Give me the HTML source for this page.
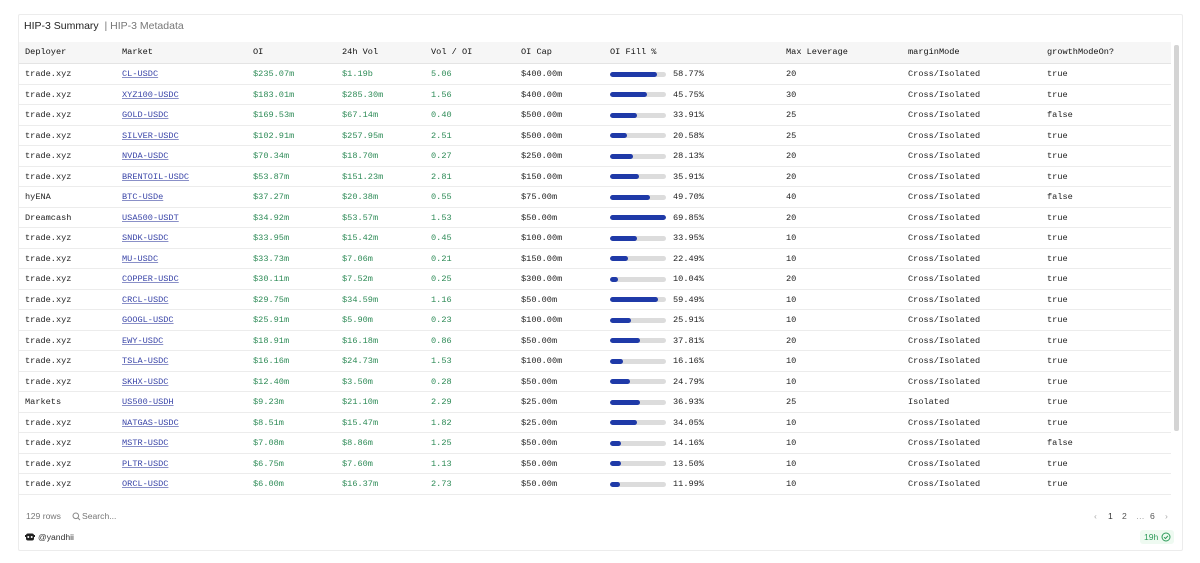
<!DOCTYPE html>
<html><head><meta charset="utf-8"><style>
*{margin:0;padding:0;box-sizing:border-box}
body{width:1200px;height:563px;background:#fff;position:relative;overflow:hidden;font-family:"Liberation Mono",monospace;font-size:8.6px;color:#222}
.card{position:absolute;left:18px;top:14px;width:1165px;height:537px;border:1px solid #ececec;border-radius:2px}
.title{position:absolute;left:24px;top:20px;font-family:"Liberation Sans",sans-serif;font-size:10.5px;color:#222}
.title span{color:#777}
.hdr{position:absolute;left:19px;top:42px;width:1152px;height:22px;background:#f6f6f6;border-bottom:1px solid #e4e4e4}
.row{position:absolute;left:19px;width:1152px;height:20.5px;border-bottom:1px solid #ececec}
.c{position:absolute;top:0;line-height:20px;white-space:nowrap}
.hdr .c{line-height:21px;color:#111}
.g{color:#2e8b57}
.l{color:#3a45a8;text-decoration:underline;text-decoration-color:#8a90c8}
.bar{position:absolute;left:591px;top:7.5px;width:56px;height:5px;border-radius:3px;background:#dcdcdc;overflow:hidden}
.bar i{display:block;height:5px;background:#1f3aa8;border-radius:3px}
.sb{position:absolute;left:1174px;top:45px;width:5px;height:386px;background:#d4d4d4;border-radius:2px}
.foot{position:absolute;font-family:"Liberation Sans",sans-serif;font-size:8.6px;color:#777}
</style></head><body>
<div class="card"></div>
<div class="title">HIP-3 Summary <span>&nbsp;| HIP-3 Metadata</span></div>
<div class="hdr">
<div class="c" style="left:6px">Deployer</div><div class="c" style="left:103px">Market</div><div class="c" style="left:234px">OI</div><div class="c" style="left:323px">24h Vol</div><div class="c" style="left:412px">Vol / OI</div><div class="c" style="left:502px">OI Cap</div><div class="c" style="left:591px">OI Fill %</div><div class="c" style="left:767px">Max Leverage</div><div class="c" style="left:889px">marginMode</div><div class="c" style="left:1028px">growthModeOn?</div>
</div>
<div class="sb"></div>

<div class="row" style="top:64px"><div class="c" style="left:6px">trade.xyz</div><div class="c l" style="left:103px">CL-USDC</div><div class="c g" style="left:234px">$235.07m</div><div class="c g" style="left:323px">$1.19b</div><div class="c g" style="left:412px">5.06</div><div class="c" style="left:502px">$400.00m</div><div class="bar"><i style="width:47px"></i></div><div class="c" style="left:654px">58.77%</div><div class="c" style="left:767px">20</div><div class="c" style="left:889px">Cross/Isolated</div><div class="c" style="left:1028px">true</div></div>
<div class="row" style="top:84.5px"><div class="c" style="left:6px">trade.xyz</div><div class="c l" style="left:103px">XYZ100-USDC</div><div class="c g" style="left:234px">$183.01m</div><div class="c g" style="left:323px">$285.30m</div><div class="c g" style="left:412px">1.56</div><div class="c" style="left:502px">$400.00m</div><div class="bar"><i style="width:36.7px"></i></div><div class="c" style="left:654px">45.75%</div><div class="c" style="left:767px">30</div><div class="c" style="left:889px">Cross/Isolated</div><div class="c" style="left:1028px">true</div></div>
<div class="row" style="top:105px"><div class="c" style="left:6px">trade.xyz</div><div class="c l" style="left:103px">GOLD-USDC</div><div class="c g" style="left:234px">$169.53m</div><div class="c g" style="left:323px">$67.14m</div><div class="c g" style="left:412px">0.40</div><div class="c" style="left:502px">$500.00m</div><div class="bar"><i style="width:27.2px"></i></div><div class="c" style="left:654px">33.91%</div><div class="c" style="left:767px">25</div><div class="c" style="left:889px">Cross/Isolated</div><div class="c" style="left:1028px">false</div></div>
<div class="row" style="top:125.5px"><div class="c" style="left:6px">trade.xyz</div><div class="c l" style="left:103px">SILVER-USDC</div><div class="c g" style="left:234px">$102.91m</div><div class="c g" style="left:323px">$257.95m</div><div class="c g" style="left:412px">2.51</div><div class="c" style="left:502px">$500.00m</div><div class="bar"><i style="width:16.5px"></i></div><div class="c" style="left:654px">20.58%</div><div class="c" style="left:767px">25</div><div class="c" style="left:889px">Cross/Isolated</div><div class="c" style="left:1028px">true</div></div>
<div class="row" style="top:146px"><div class="c" style="left:6px">trade.xyz</div><div class="c l" style="left:103px">NVDA-USDC</div><div class="c g" style="left:234px">$70.34m</div><div class="c g" style="left:323px">$18.70m</div><div class="c g" style="left:412px">0.27</div><div class="c" style="left:502px">$250.00m</div><div class="bar"><i style="width:22.6px"></i></div><div class="c" style="left:654px">28.13%</div><div class="c" style="left:767px">20</div><div class="c" style="left:889px">Cross/Isolated</div><div class="c" style="left:1028px">true</div></div>
<div class="row" style="top:166.5px"><div class="c" style="left:6px">trade.xyz</div><div class="c l" style="left:103px">BRENTOIL-USDC</div><div class="c g" style="left:234px">$53.87m</div><div class="c g" style="left:323px">$151.23m</div><div class="c g" style="left:412px">2.81</div><div class="c" style="left:502px">$150.00m</div><div class="bar"><i style="width:28.8px"></i></div><div class="c" style="left:654px">35.91%</div><div class="c" style="left:767px">20</div><div class="c" style="left:889px">Cross/Isolated</div><div class="c" style="left:1028px">true</div></div>
<div class="row" style="top:187px"><div class="c" style="left:6px">hyENA</div><div class="c l" style="left:103px">BTC-USDe</div><div class="c g" style="left:234px">$37.27m</div><div class="c g" style="left:323px">$20.38m</div><div class="c g" style="left:412px">0.55</div><div class="c" style="left:502px">$75.00m</div><div class="bar"><i style="width:39.8px"></i></div><div class="c" style="left:654px">49.70%</div><div class="c" style="left:767px">40</div><div class="c" style="left:889px">Cross/Isolated</div><div class="c" style="left:1028px">false</div></div>
<div class="row" style="top:207.5px"><div class="c" style="left:6px">Dreamcash</div><div class="c l" style="left:103px">USA500-USDT</div><div class="c g" style="left:234px">$34.92m</div><div class="c g" style="left:323px">$53.57m</div><div class="c g" style="left:412px">1.53</div><div class="c" style="left:502px">$50.00m</div><div class="bar"><i style="width:56px"></i></div><div class="c" style="left:654px">69.85%</div><div class="c" style="left:767px">20</div><div class="c" style="left:889px">Cross/Isolated</div><div class="c" style="left:1028px">true</div></div>
<div class="row" style="top:228px"><div class="c" style="left:6px">trade.xyz</div><div class="c l" style="left:103px">SNDK-USDC</div><div class="c g" style="left:234px">$33.95m</div><div class="c g" style="left:323px">$15.42m</div><div class="c g" style="left:412px">0.45</div><div class="c" style="left:502px">$100.00m</div><div class="bar"><i style="width:27.2px"></i></div><div class="c" style="left:654px">33.95%</div><div class="c" style="left:767px">10</div><div class="c" style="left:889px">Cross/Isolated</div><div class="c" style="left:1028px">true</div></div>
<div class="row" style="top:248.5px"><div class="c" style="left:6px">trade.xyz</div><div class="c l" style="left:103px">MU-USDC</div><div class="c g" style="left:234px">$33.73m</div><div class="c g" style="left:323px">$7.06m</div><div class="c g" style="left:412px">0.21</div><div class="c" style="left:502px">$150.00m</div><div class="bar"><i style="width:18px"></i></div><div class="c" style="left:654px">22.49%</div><div class="c" style="left:767px">10</div><div class="c" style="left:889px">Cross/Isolated</div><div class="c" style="left:1028px">true</div></div>
<div class="row" style="top:269px"><div class="c" style="left:6px">trade.xyz</div><div class="c l" style="left:103px">COPPER-USDC</div><div class="c g" style="left:234px">$30.11m</div><div class="c g" style="left:323px">$7.52m</div><div class="c g" style="left:412px">0.25</div><div class="c" style="left:502px">$300.00m</div><div class="bar"><i style="width:8px"></i></div><div class="c" style="left:654px">10.04%</div><div class="c" style="left:767px">20</div><div class="c" style="left:889px">Cross/Isolated</div><div class="c" style="left:1028px">true</div></div>
<div class="row" style="top:289.5px"><div class="c" style="left:6px">trade.xyz</div><div class="c l" style="left:103px">CRCL-USDC</div><div class="c g" style="left:234px">$29.75m</div><div class="c g" style="left:323px">$34.59m</div><div class="c g" style="left:412px">1.16</div><div class="c" style="left:502px">$50.00m</div><div class="bar"><i style="width:47.7px"></i></div><div class="c" style="left:654px">59.49%</div><div class="c" style="left:767px">10</div><div class="c" style="left:889px">Cross/Isolated</div><div class="c" style="left:1028px">true</div></div>
<div class="row" style="top:310px"><div class="c" style="left:6px">trade.xyz</div><div class="c l" style="left:103px">GOOGL-USDC</div><div class="c g" style="left:234px">$25.91m</div><div class="c g" style="left:323px">$5.90m</div><div class="c g" style="left:412px">0.23</div><div class="c" style="left:502px">$100.00m</div><div class="bar"><i style="width:20.8px"></i></div><div class="c" style="left:654px">25.91%</div><div class="c" style="left:767px">10</div><div class="c" style="left:889px">Cross/Isolated</div><div class="c" style="left:1028px">true</div></div>
<div class="row" style="top:330.5px"><div class="c" style="left:6px">trade.xyz</div><div class="c l" style="left:103px">EWY-USDC</div><div class="c g" style="left:234px">$18.91m</div><div class="c g" style="left:323px">$16.18m</div><div class="c g" style="left:412px">0.86</div><div class="c" style="left:502px">$50.00m</div><div class="bar"><i style="width:30.3px"></i></div><div class="c" style="left:654px">37.81%</div><div class="c" style="left:767px">20</div><div class="c" style="left:889px">Cross/Isolated</div><div class="c" style="left:1028px">true</div></div>
<div class="row" style="top:351px"><div class="c" style="left:6px">trade.xyz</div><div class="c l" style="left:103px">TSLA-USDC</div><div class="c g" style="left:234px">$16.16m</div><div class="c g" style="left:323px">$24.73m</div><div class="c g" style="left:412px">1.53</div><div class="c" style="left:502px">$100.00m</div><div class="bar"><i style="width:13px"></i></div><div class="c" style="left:654px">16.16%</div><div class="c" style="left:767px">10</div><div class="c" style="left:889px">Cross/Isolated</div><div class="c" style="left:1028px">true</div></div>
<div class="row" style="top:371.5px"><div class="c" style="left:6px">trade.xyz</div><div class="c l" style="left:103px">SKHX-USDC</div><div class="c g" style="left:234px">$12.40m</div><div class="c g" style="left:323px">$3.50m</div><div class="c g" style="left:412px">0.28</div><div class="c" style="left:502px">$50.00m</div><div class="bar"><i style="width:19.9px"></i></div><div class="c" style="left:654px">24.79%</div><div class="c" style="left:767px">10</div><div class="c" style="left:889px">Cross/Isolated</div><div class="c" style="left:1028px">true</div></div>
<div class="row" style="top:392px"><div class="c" style="left:6px">Markets</div><div class="c l" style="left:103px">US500-USDH</div><div class="c g" style="left:234px">$9.23m</div><div class="c g" style="left:323px">$21.10m</div><div class="c g" style="left:412px">2.29</div><div class="c" style="left:502px">$25.00m</div><div class="bar"><i style="width:29.6px"></i></div><div class="c" style="left:654px">36.93%</div><div class="c" style="left:767px">25</div><div class="c" style="left:889px">Isolated</div><div class="c" style="left:1028px">true</div></div>
<div class="row" style="top:412.5px"><div class="c" style="left:6px">trade.xyz</div><div class="c l" style="left:103px">NATGAS-USDC</div><div class="c g" style="left:234px">$8.51m</div><div class="c g" style="left:323px">$15.47m</div><div class="c g" style="left:412px">1.82</div><div class="c" style="left:502px">$25.00m</div><div class="bar"><i style="width:27.3px"></i></div><div class="c" style="left:654px">34.05%</div><div class="c" style="left:767px">10</div><div class="c" style="left:889px">Cross/Isolated</div><div class="c" style="left:1028px">true</div></div>
<div class="row" style="top:433px"><div class="c" style="left:6px">trade.xyz</div><div class="c l" style="left:103px">MSTR-USDC</div><div class="c g" style="left:234px">$7.08m</div><div class="c g" style="left:323px">$8.86m</div><div class="c g" style="left:412px">1.25</div><div class="c" style="left:502px">$50.00m</div><div class="bar"><i style="width:11.4px"></i></div><div class="c" style="left:654px">14.16%</div><div class="c" style="left:767px">10</div><div class="c" style="left:889px">Cross/Isolated</div><div class="c" style="left:1028px">false</div></div>
<div class="row" style="top:453.5px"><div class="c" style="left:6px">trade.xyz</div><div class="c l" style="left:103px">PLTR-USDC</div><div class="c g" style="left:234px">$6.75m</div><div class="c g" style="left:323px">$7.60m</div><div class="c g" style="left:412px">1.13</div><div class="c" style="left:502px">$50.00m</div><div class="bar"><i style="width:10.8px"></i></div><div class="c" style="left:654px">13.50%</div><div class="c" style="left:767px">10</div><div class="c" style="left:889px">Cross/Isolated</div><div class="c" style="left:1028px">true</div></div>
<div class="row" style="top:474px"><div class="c" style="left:6px">trade.xyz</div><div class="c l" style="left:103px">ORCL-USDC</div><div class="c g" style="left:234px">$6.00m</div><div class="c g" style="left:323px">$16.37m</div><div class="c g" style="left:412px">2.73</div><div class="c" style="left:502px">$50.00m</div><div class="bar"><i style="width:9.6px"></i></div><div class="c" style="left:654px">11.99%</div><div class="c" style="left:767px">10</div><div class="c" style="left:889px">Cross/Isolated</div><div class="c" style="left:1028px">true</div></div>

<div class="foot" style="left:26px;top:511px">129 rows</div>
<svg style="position:absolute;left:72px;top:512px" width="9" height="9" viewBox="0 0 9 9"><circle cx="3.8" cy="3.8" r="2.8" fill="none" stroke="#888" stroke-width="1"/><path d="M5.8 5.8L8 8" stroke="#888" stroke-width="1"/></svg>
<div class="foot" style="left:82px;top:511px">Search...</div>
<div class="foot" style="left:1094px;top:511px;color:#aaa">‹</div>
<div class="foot" style="left:1108px;top:511px;color:#333">1</div>
<div class="foot" style="left:1122px;top:511px;color:#555">2</div>
<div class="foot" style="left:1136px;top:511px;color:#999">…</div>
<div class="foot" style="left:1150px;top:511px;color:#555">6</div>
<div class="foot" style="left:1165px;top:511px;color:#aaa">›</div>
<svg style="position:absolute;left:25px;top:532px" width="10" height="10" viewBox="0 0 10 10"><rect x="1" y="1.5" width="8" height="7" rx="2" fill="#222"/><rect x="0" y="3" width="10" height="2" fill="#222"/><circle cx="3.3" cy="5" r="1" fill="#fff"/><circle cx="6.7" cy="5" r="1" fill="#fff"/></svg>
<div class="foot" style="left:38px;top:532px;color:#333">@yandhii</div>
<div style="position:absolute;left:1140px;top:530px;width:34px;height:14px;background:#eefaf1;border-radius:3px"></div>
<div class="foot" style="left:1144px;top:532px;color:#2e9b5a">19h</div>
<svg style="position:absolute;left:1161px;top:532px" width="10" height="10" viewBox="0 0 10 10"><circle cx="5" cy="5" r="4" fill="none" stroke="#2e9b5a" stroke-width="1"/><path d="M3 5.2L4.5 6.5L7 3.8" fill="none" stroke="#2e9b5a" stroke-width="1"/></svg>
</body></html>
